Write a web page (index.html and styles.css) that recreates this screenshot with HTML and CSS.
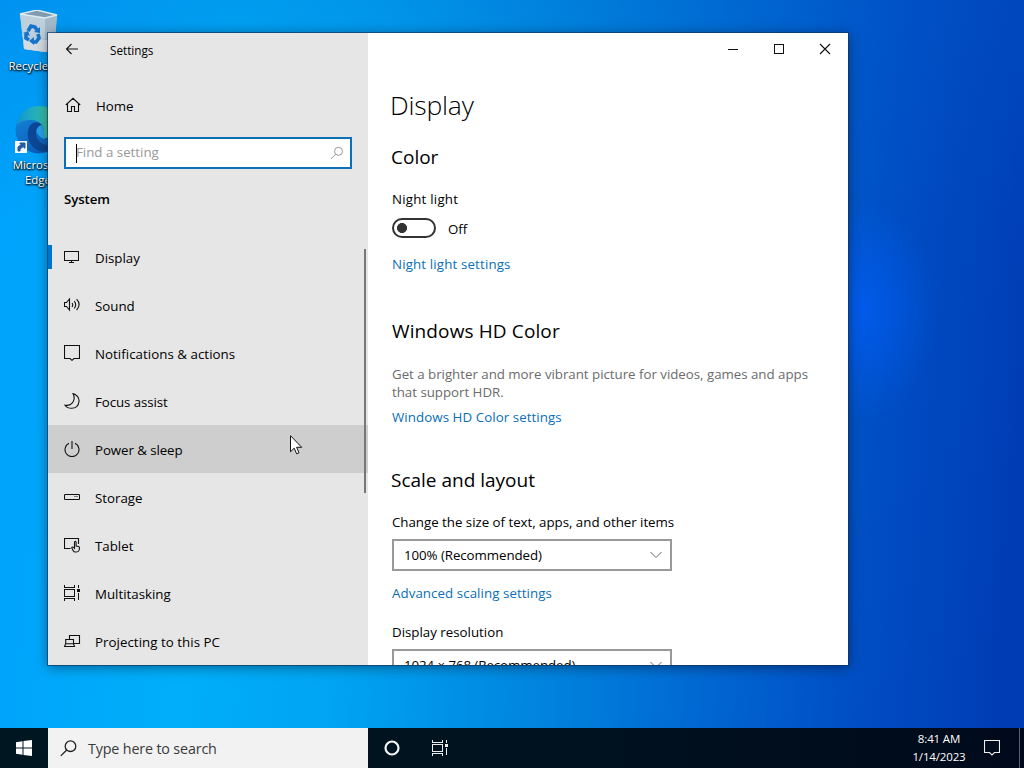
FILE: index.html
```html
<!DOCTYPE html>
<html lang="en">
<head>
<meta charset="utf-8">
<title>Settings</title>
<link rel="stylesheet" href="styles.css">
</head>
<body>
<div class="screen">
  <main class="desktop">
    <div class="shortcuts">
      <div class="shortcut">
        <svg class="bin" width="48" height="50" viewBox="0 0 48 50">
          <path d="M9 4L26 0 46 5 43 40 34 42 13 39Z" fill="#b3c9d8"/>
          <path d="M9 4L34 8 34 42 13 39Z" fill="#bdd0dc"/>
          <path d="M34 8L46 5 43 40 34 42Z" fill="#a3b9ca"/>
          <path d="M9 4L26 0 46 5 34 8Z" fill="#7f9caf" stroke="#dceaf1" stroke-width="1.3"/>
          <path d="M13 30L43 30 43 40 34 42 13 39Z" fill="#dde1e4" opacity=".7"/>
          <path d="M17 21l3-5 4 1 2 3M27 24l1 4-3 4h-3M18 30l-3-2 0-4" fill="none" stroke="#1673cc" stroke-width="3.6"/>
          <path d="M23 22l6 1 0-6zM23 27v8l-5-4zM12 23l5-2 2 5z" fill="#1673cc"/>
        </svg>
        <span class="name bin-name">Recycle Bin</span>
      </div>
      <div class="shortcut">
        <svg class="edge" width="48" height="48" viewBox="0 0 48 48">
          <defs>
            <linearGradient id="edge-top" x1="0" x2="1"><stop offset="0" stop-color="#0f93d3"/><stop offset=".5" stop-color="#2bb5b5"/><stop offset="1" stop-color="#5fd65c"/></linearGradient>
            <linearGradient id="edge-low" x1="0" y1="0" x2=".5" y2="1"><stop offset="0" stop-color="#168ade"/><stop offset="1" stop-color="#0c5cb6"/></linearGradient>
          </defs>
          <circle cx="27" cy="24" r="23.5" fill="url(#edge-low)"/>
          <path d="M4 20C7 7 15 0 27 0s24 9 24 21c0 8-7 11-16 11-5 0-3-3-3-7 0-7-6-11-13-11-7 0-12 2-15 6z" fill="url(#edge-top)"/>
          <path d="M21 17c-7 4-7 17 0 24 8 8 20 5 26-3-14 5-24-3-23-12 0-4 3-7 6-7-3-3-6-3-9-2z" fill="#0b4794"/>
          <path d="M30 19c-4 1-6 4-5 8 2 3 4 5 7 6 3-1 0-4 0-8 0-2-1-4-2-6z" fill="#27a0e6"/>
          <rect x="3" y="35" width="12" height="12" fill="#f4f8fc"/>
          <path d="M6 45v-4l4-3H8v-1h5v5h-1v-2l-4 3v2z" fill="#245ba5" stroke="#245ba5"/>
        </svg>
        <span class="name edge-name">Microsoft<br>Edge</span>
      </div>
    </div>

    <section class="window">
      <aside class="side">
        <div class="side-title">
          <svg width="14" height="12" viewBox="0 0 14 12" class="ink"><path d="M13 6H1.5M6.5 1l-5 5 5 5"/></svg>
          <span class="caption">Settings</span>
        </div>
        <div class="home">
          <svg width="16" height="16" viewBox="0 0 16 16" class="ink"><path d="M.8 8L8 1.3 15.200 8M2.500 6.800v7.700h4v-5h3v5h4V6.800"/></svg>
          <span>Home</span>
        </div>
        <div class="search">
          <i class="caret"></i><span class="placeholder">Find a setting</span>
          <svg width="14" height="14" viewBox="0 0 14 14"><g fill="none" stroke="#999"><circle cx="8.500" cy="5.300" r="4"/><path d="M5.600 8.200L1 13"/></g></svg>
        </div>
        <h3 class="group">System</h3>
        <nav class="nav">
          <a class="item current"><svg width="16" height="16" viewBox="0 0 16 16" class="ink crisp"><path d="M.5 2.500h14v9H.5zM7.500 11.500v2M5 13.500h5"/></svg><span>Display</span></a>
          <a class="item"><svg width="17" height="16" viewBox="0 0 17 16" class="ink"><path d="M.5 5.500h2L5.500 2v11l-3-3.500h-2zM8 6q1.500 1.700 0 4M10.200 4.200q3 3.600 0 7.200M12.600 2.200q5 5.300 0 11"/></svg><span>Sound</span></a>
          <a class="item"><svg width="16" height="16" viewBox="0 0 16 16" class="ink"><path d="M.5.500h15v13h-5.500L8 15.300l-2-1.800H.5z"/></svg><span class="n-notify">Notifications &amp; actions</span></a>
          <a class="item"><svg width="16" height="16" viewBox="0 0 16 16" class="ink"><path d="M9 .600C13 1.500 15.400 5 15 8.500 14.500 12.800 11.500 15.300 7.500 15.300 4.700 15.300 2.500 14.300 1 12.200 4.500 12.700 7.500 11.500 9 9 10.500 6.500 10.500 3.500 9 .600z"/></svg><span class="tight">Focus assist</span></a>
          <a class="item hover"><svg width="16" height="16" viewBox="0 0 16 16" class="ink"><path d="M8 0v8M5 2.300a7 7 0 1 0 6 0"/></svg><span class="tight">Power &amp; sleep</span></a>
          <a class="item"><svg width="16" height="16" viewBox="0 0 16 16" class="ink"><rect x=".5" y="5.500" width="15" height="5" rx=".7"/><path d="M10.500 7.500h1M12.500 7.500h1"/></svg><span>Storage</span></a>
          <a class="item"><svg width="16" height="16" viewBox="0 0 16 16" class="ink"><path d="M6.500 11.500h-6V1.500h14V7M10.500 10.500V5.300q0-1 .8-1t.8 1v3.800l2.500.4q.9.200.9 1.200l-.3 2.300q-.4 2-2.700 2h-1.100q-1.500 0-2.200-1.300L7.700 10.800q.5-1.300 1.700-.4l1.100.9z"/></svg><span>Tablet</span></a>
          <a class="item"><svg width="17" height="16" viewBox="0 0 17 16" class="ink crisp"><path d="M.5 0v2.500h10V0M.5 4.500h10v7H.5zM.5 15.500v-2h10v2M14.500 0v3M14.500 8v7"/><path d="M13 4h3v3h-3z" fill="#111" stroke="none"/></svg><span>Multitasking</span></a>
          <a class="item"><svg width="17" height="16" viewBox="0 0 17 16" class="ink"><path d="M5.500 6V2.500h10v8H10M1.700 11V6.500h7.800v4.500M1.700 10.700L.5 13.500h10L9.500 10.700z"/></svg><span class="loose">Projecting to this PC</span></a>
          <i class="scrollbar"></i>
        </nav>
      </aside>
      <article class="content">
        <div class="controls">
          <svg width="46" height="32" viewBox="0 0 46 32" class="ink crisp"><path d="M18 16.500h10"/></svg>
          <svg width="46" height="32" viewBox="0 0 46 32" class="ink crisp"><path d="M18.500 11.500h9v9h-9z"/></svg>
          <svg width="46" height="32" viewBox="0 0 46 32" class="ink"><path d="M18 11l10 10M28 11L18 21"/></svg>
        </div>
        <h1 class="page-title">Display</h1>
        <h2 class="color-title">Color</h2>
        <p class="label night-label">Night light</p>
        <div class="toggle-row"><span class="toggle"></span><span class="off">Off</span></div>
        <a class="link night-link">Night light settings</a>
        <h2 class="hd-title">Windows HD Color</h2>
        <p class="note">Get a brighter and more vibrant picture for videos, games and apps<br>that support HDR.</p>
        <a class="link hd-link">Windows HD Color settings</a>
        <h2 class="scale-title">Scale and layout</h2>
        <p class="label scale-label">Change the size of text, apps, and other items</p>
        <div class="select"><span>100% (Recommended)</span><svg width="14" height="8" viewBox="0 0 14 8"><path d="M1.500 1L7 6.500 12.500 1" fill="none" stroke="#666"/></svg></div>
        <a class="link scale-link">Advanced scaling settings</a>
        <p class="label res-label">Display resolution</p>
        <div class="select"><span>1024 × 768 (Recommended)</span><svg width="14" height="8" viewBox="0 0 14 8"><path d="M1.500 1L7 6.500 12.500 1" fill="none" stroke="#666"/></svg></div>
      </article>
    </section>
    <svg class="pointer" width="13" height="20" viewBox="0 0 13 20"><path d="M.5.700v16.100l3.700-3.600 2.400 5.600 2.400-1-2.400-5.500h5.100z" fill="#fff" stroke="#111"/></svg>
  </main>

  <footer class="taskbar">
    <div class="start"><svg width="16" height="16" viewBox="0 0 16 16"><path d="M0 2.200L6.500 1.300V7.500H0zM7.500 1.100L16 0V7.500H7.500zM0 8.500H6.500V14.700L0 13.800zM7.500 8.500H16V16L7.500 14.900z" fill="#fff"/></svg></div>
    <div class="task-search">
      <svg width="17" height="17" viewBox="0 0 17 17"><g fill="none" stroke="#222" stroke-width="1.300"><circle cx="10.500" cy="6.200" r="5.300"/><path d="M6.700 10L.8 15.900"/></g></svg>
      <span>Type here to search</span>
    </div>
    <div class="task-button"><svg width="16" height="16" viewBox="0 0 16 16"><circle cx="8" cy="8" r="6.500" fill="none" stroke="#f4f7f8" stroke-width="2.200"/></svg></div>
    <div class="task-button"><svg width="17" height="16" viewBox="0 0 17 16" class="pale crisp"><path d="M.5 0v2.500h10V0M.5 4.500h10v7H.5zM.5 15.500v-2h10v2M14.500 0v3M14.500 8v7"/><path d="M13 4h3v3h-3z" fill="#eee" stroke="none"/></svg></div>
    <div class="clock"><span class="time">8:41 AM</span><span class="date">1/14/2023</span></div>
    <div class="action"><svg width="16" height="16" viewBox="0 0 16 16" class="pale"><path d="M.5.500h15v12h-5L8 15l-2.500-2.500h-5z"/></svg></div>
    <div class="peek"></div>
  </footer>
</div>
</body>
</html>
```
FILE: styles.css
```css
* { box-sizing: border-box; }
body { margin: 0; font: 13.3px/20px "Open Sans", "Noto Sans", sans-serif; color: #000; }
h1, h2, h3, p { margin: 0; font-weight: 400; }
svg { display: block; flex: none; }
span { white-space: nowrap; }
.ink { fill: none; stroke: #111; stroke-width: 1.1; }
.pale { fill: none; stroke: #eee; stroke-width: 1.1; }
.crisp { shape-rendering: crispEdges; stroke-width: 1; }

.screen { width: 1024px; height: 768px; display: flex; flex-direction: column; overflow: hidden; }
.desktop {
  position: relative; flex: 1; overflow: hidden;
  background:
    radial-gradient(ellipse 75px 110px at 862px 310px, rgba(0, 94, 245, .75), rgba(0, 90, 240, 0)),
    linear-gradient(180deg, rgba(0, 90, 200, .22), rgba(0, 90, 200, 0) 30%),
    linear-gradient(95deg, #00a2fb 0%, #00aefa 22%, #00a4f2 36%, #0086e0 54%, #0064d0 72%, #004ec4 84%, #003cb4 98%);
}

.shortcuts { display: flex; flex-direction: column; width: 76px; padding-top: 10px; }
.shortcut { display: flex; flex-direction: column; align-items: center; height: 96px; color: #fff; font-size: 11.5px; line-height: 15px; text-align: center; text-shadow: 0 1px 2px #000, 1px 1px 2px #000; }
.bin { margin-right: 6px; }
.edge { margin-right: 4px; }
.bin-name { margin: -2px 0 0 1px; }
.edge-name { margin-top: 3px; }

.window { position: absolute; left: 48px; top: 33px; width: 800px; height: 632px; display: flex; overflow: hidden; background: #fff; box-shadow: 0 0 0 1px rgba(20, 50, 90, .65), 0 2px 12px rgba(0, 0, 0, .45); }
.side { width: 320px; display: flex; flex-direction: column; background: #e6e6e6; }
.side-title { display: flex; align-items: center; height: 32px; padding-left: 17px; gap: 31px; }
.caption { font-size: 11.7px; padding-top: 1px; }
.home { display: flex; align-items: center; height: 48px; margin-top: 16px; padding-left: 17px; gap: 15px; }
.home span { padding-top: 1px; }
.search { display: flex; align-items: center; height: 32px; margin: 8px 16px 0; padding: 0 6px 0 10px; border: 2px solid #0b70b5; background: #fff; }
.caret { width: 1px; height: 19px; margin-right: -1px; background: #000; }
.placeholder { flex: 1; padding-bottom: 2px; color: #999; }
.group { height: 20px; margin: 20px 0 0 16px; font-size: 13.3px; font-weight: 600; letter-spacing: -.1px; }
.nav { position: relative; margin-top: 24px; }
.item { display: flex; align-items: center; height: 48px; padding-left: 16px; }
.item span { margin-left: auto; width: 273px; padding-top: 2px; }
.item .tight { letter-spacing: -.08px; }
.item .loose, .item .n-notify { letter-spacing: .04px; }
.current { background: linear-gradient(#0074cc, #0074cc) 0 12px / 4px 24px no-repeat; }
.hover { background: #cecece; }
.scrollbar { position: absolute; left: 316px; top: 16px; width: 2px; height: 244px; background: #777; }

.content { flex: 1; padding-left: 24px; }
.controls { display: flex; justify-content: flex-end; height: 32px; }
.page-title { margin: 20px 0 0 -2px; font-size: 26.5px; line-height: 40px; font-weight: 350; letter-spacing: -.2px; }
h2 { font-size: 19px; line-height: 28px; }
.color-title { margin: 18px 0 0 -1px; }
.night-label { margin-top: 18px; letter-spacing: .22px; }
.toggle-row { display: flex; align-items: center; gap: 12px; height: 20px; margin-top: 9px; }
.toggle { width: 44px; height: 20px; border: 2px solid #333; border-radius: 10px; background: radial-gradient(circle at 8px 8px, #333 4.7px, transparent 5.3px); }
.off { padding-top: 2px; }
.link { display: block; height: 20px; color: #0a6fb8; letter-spacing: .07px; }
.night-link { margin-top: 16px; letter-spacing: .15px; }
.hd-title { margin-top: 43px; letter-spacing: .12px; }
.note { margin-top: 20px; line-height: 18px; color: #6b6b6b; letter-spacing: -.02px; }
.hd-link { margin-top: 6px; }
.scale-title { margin: 39px 0 0 -1px; }
.scale-label { margin-top: 18px; letter-spacing: -.02px; }
.select { display: flex; align-items: center; justify-content: space-between; width: 280px; height: 32px; margin-top: 7px; padding: 0 7px 0 10px; border: 2px solid #999; letter-spacing: -.07px; }
.scale-link { margin-top: 12px; }
.res-label { margin-top: 19px; }

.pointer { position: absolute; left: 290px; top: 435px; }

.taskbar { display: flex; height: 40px; background: linear-gradient(90deg, #001722, #00131f 45%, #000c1c 85%, #000a1c); color: #fff; }
.start { width: 48px; display: grid; place-items: center; }
.task-search { display: flex; align-items: center; gap: 11px; width: 320px; padding-left: 12px; background: #f2f2f2; color: #3a3a3a; font-size: 14.3px; letter-spacing: -.15px; }
.task-search span { padding-top: 1px; }
.task-button { width: 48px; display: grid; place-items: center; }
.clock { display: flex; flex-direction: column; align-items: center; width: 50px; margin-left: auto; padding-top: 2px; font-size: 11.5px; line-height: 18px; letter-spacing: -.15px; }
.action { width: 55px; display: grid; place-items: center; }
.peek { width: 5px; border-left: 1px solid #56606c; }
```
